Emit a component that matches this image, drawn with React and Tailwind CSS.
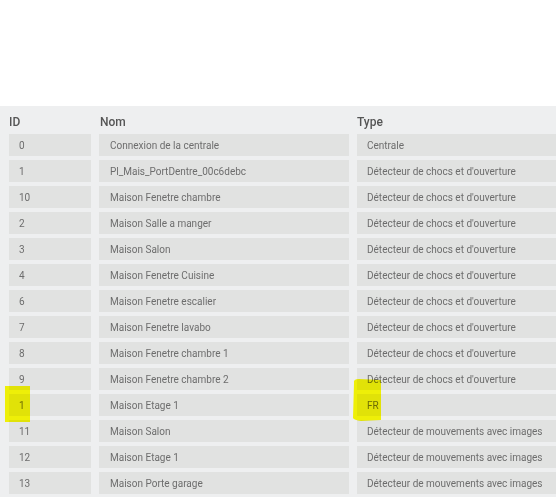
const rows = [
  ["0", "Connexion de la centrale", "Centrale"],
  ["1", "Pl_Mais_PortDentre_00c6debc", "Détecteur de chocs et d'ouverture"],
  ["10", "Maison Fenetre chambre", "Détecteur de chocs et d'ouverture"],
  ["2", "Maison Salle a manger", "Détecteur de chocs et d'ouverture"],
  ["3", "Maison Salon", "Détecteur de chocs et d'ouverture"],
  ["4", "Maison Fenetre Cuisine", "Détecteur de chocs et d'ouverture"],
  ["6", "Maison Fenetre escalier", "Détecteur de chocs et d'ouverture"],
  ["7", "Maison Fenetre lavabo", "Détecteur de chocs et d'ouverture"],
  ["8", "Maison Fenetre chambre 1", "Détecteur de chocs et d'ouverture"],
  ["9", "Maison Fenetre chambre 2", "Détecteur de chocs et d'ouverture"],
  ["1", "Maison Etage 1", "FR"],
  ["11", "Maison Salon", "Détecteur de mouvements avec images"],
  ["12", "Maison Etage 1", "Détecteur de mouvements avec images"],
  ["13", "Maison Porte garage", "Détecteur de mouvements avec images"],
];

export default function App() {
  return (
    <div className="relative w-[556px] h-[499px] bg-white overflow-hidden" style={{ fontFamily: "Roboto, 'Liberation Sans', sans-serif" }}>
      <div className="h-[106px]" />
      <div className="bg-[#eeeff0] pt-[5px] pb-[3px] pl-[9px]">
        <div className="grid grid-cols-[82px_250px_1fr] gap-x-[8px] h-[22px] items-center text-[12px] font-medium text-[#555]">
          <div>ID</div>
          <div className="pl-[1px]">Nom</div>
          <div>Type</div>
        </div>
        <div className="mt-[1px] flex flex-col gap-[4px]">
          {rows.map((r, i) => (
            <div key={i} className="grid grid-cols-[82px_250px_1fr] gap-x-[8px] h-[22px] text-[10px] text-[#6d6d6d]">
              <div className="bg-[#e1e2e1] flex items-center pl-[10px] pt-[1px]">{r[0]}</div>
              <div className="bg-[#e1e2e1] flex items-center pl-[11px] pt-[1px] whitespace-nowrap">{r[1]}</div>
              <div className="bg-[#e1e2e1] flex items-center pl-[10px] pt-[1px] whitespace-nowrap">{r[2]}</div>
            </div>
          ))}
        </div>
      </div>
      <div className="absolute left-[5px] top-[386px] w-[25px] h-[36px] bg-[#ffff08] mix-blend-multiply" />
      <svg className="absolute left-[351px] top-[378px] mix-blend-multiply" width="31" height="44" viewBox="0 0 31 44">
        <path d="M3 5 Q2 1 8 1 L30 2 L30 42 L10 43 Q3 42 2 40 Z" fill="#ffff08" />
      </svg>
    </div>
  );
}
